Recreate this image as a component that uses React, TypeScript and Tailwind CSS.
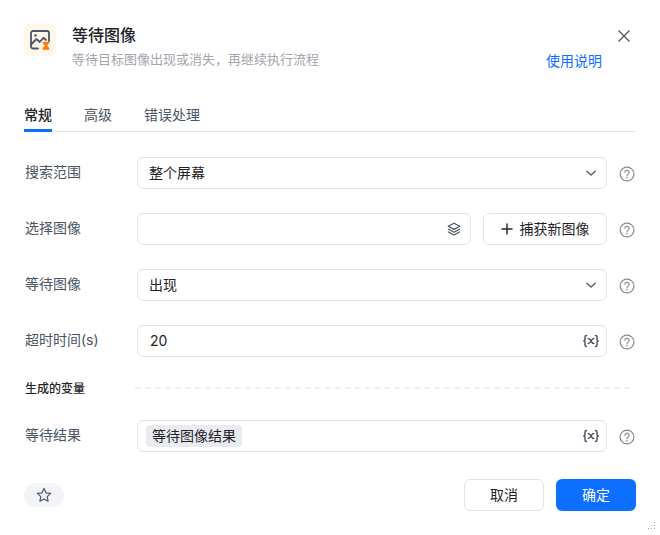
import React from "react";

const font = { fontFamily: '"Inter","Noto Sans CJK SC",sans-serif' };

function Help() {
  return (
    <svg width="16" height="16" viewBox="0 0 16 16" fill="none" className="shrink-0 ml-[12px] mt-[1px] text-[#8a8a8a]" stroke="currentColor">
      <circle cx="8" cy="8" r="6.9" strokeWidth="1.2" />
      <path d="M5.900 6.300a2.100 2.100 0 1 1 3.300 1.700c-.8.5-1.200.9-1.200 1.800" strokeWidth="1.200" strokeLinecap="round" />
      <circle cx="8" cy="11.800" r=".8" fill="currentColor" stroke="none" />
    </svg>
  );
}

function Chevron() {
  return (
    <svg width="12" height="12" viewBox="0 0 12 12" fill="none" stroke="#4b5563" strokeWidth="1.2" strokeLinecap="round" strokeLinejoin="round" className="shrink-0">
      <path d="M1.800 4.200 6 8l4.200-3.800" />
    </svg>
  );
}

function VarIcon() {
  return (
    <svg width="16" height="14" viewBox="0 0 16 14" fill="none" stroke="#4b5563" strokeWidth="1.500" strokeLinecap="round" strokeLinejoin="round" className="shrink-0 -mr-[2px]">
      <path d="M3.500 1.500C2.300 1.500 2 2 2 3v2.400c0 .8-.4 1.300-1.200 1.600.8.300 1.200.8 1.200 1.600V11c0 1 .3 1.500 1.500 1.500" />
      <path d="M12.500 1.500c1.200 0 1.500.5 1.500 1.500v2.400c0 .8.400 1.300 1.200 1.600-.8.300-1.200.8-1.200 1.600V11c0 1-.3 1.500-1.500 1.500" />
      <path d="M5.200 4.500c1.500 0 1.900.8 2.800 2.500s1.300 2.500 2.800 2.500M10.800 4.500C9.400 4.500 8.600 5.800 8 7s-1.400 2.500-2.800 2.500" />
    </svg>
  );
}

function Row({ label, children, className }: { label: string; children: React.ReactNode; className: string }) {
  return (
    <div className={`flex items-start ${className}`}>
      <div className="w-[113px] pl-[1px] pt-[5px] text-[14px] leading-[20px] text-[#4b5563] shrink-0">{label}</div>
      {children}
    </div>
  );
}

function Box({ children, className = "" }: { children?: React.ReactNode; className?: string }) {
  return (
    <div className={`h-8 flex items-center border border-[#e2e3e9] rounded-md bg-white pr-[9px] text-[14px] text-[#1f2329] ${className}`}>
      {children}
    </div>
  );
}

export default function App() {
  return (
    <div className="relative w-[660px] h-[535px] bg-white overflow-hidden px-6 pt-6" style={font}>
      <div className="flex items-start h-[32px]">
        <div className="w-8 h-8 rounded-md bg-[#fff7ea] flex items-center justify-center shrink-0">
          <svg width="24" height="24" viewBox="0 0 24 24" fill="none">
            <path d="M10 20.500H5a2 2 0 0 1-2-2V5a2 2 0 0 1 2-2h14a2 2 0 0 1 2 2v8" stroke="#4b5563" strokeWidth="1.800" strokeLinecap="round" />
            <path d="M3.500 16 8.500 11l3.200 3 3.800-4.200 2.500 2.200" stroke="#4b5563" strokeWidth="1.800" strokeLinecap="round" strokeLinejoin="round" />
            <circle cx="7.500" cy="7.500" r="1.300" fill="#4b5563" />
            <path d="M14.700 13.700h6.600v1.600l-2.200 2.400 2.200 2.400v1.600h-6.600v-1.600l2.200-2.400-2.200-2.400z" fill="#f97c12" />
          </svg>
        </div>
        <div className="ml-4 flex-1 min-w-0">
          <div className="text-[16px] leading-[22px] font-medium text-[#1f2329]">等待图像</div>
          <div className="mt-[3px] text-[13px] leading-[20px] text-[#a3a6ad]">等待目标图像出现或消失，再继续执行流程</div>
        </div>
        <div className="w-[90px] h-[60px] relative shrink-0">
          <svg width="14" height="14" viewBox="0 0 14 14" fill="none" stroke="#4b5563" strokeWidth="1.300" strokeLinecap="round" className="absolute left-[71px] top-[5px]">
            <path d="M2 2l10 10M12 2 2 12" />
          </svg>
          <div className="absolute left-0 top-[27px] text-[14px] leading-[20px] text-[#0c6fff] whitespace-nowrap">使用说明</div>
        </div>
      </div>

      <div className="mt-[38px] flex h-[38px] border-b border-[#e4e5e9] text-[14px] leading-[20px] pt-[11px]">
        <div className="relative w-7 h-[26px] font-medium text-[#1f2329]">
          常规
          <div className="absolute left-0 right-0 -bottom-[1px] h-[3px] bg-[#0c6fff]" />
        </div>
        <div className="ml-8 text-[#4b5563]">高级</div>
        <div className="ml-8 text-[#4b5563]">错误处理</div>
      </div>

      <div className="w-[612px]">
        <Row label="搜索范围" className="mt-[25px]">
          <Box className="w-[470px] justify-between pl-[11px]"><span className="pb-[2px]">整个屏幕</span><Chevron /></Box>
          <div className="pt-[8px]"><Help /></div>
        </Row>
        <Row label="选择图像" className="mt-6">
          <Box className="w-[334px] justify-end pl-3">
            <svg width="14" height="14" viewBox="0 0 14 14" fill="none" stroke="#4b5563" strokeWidth="1.200" strokeLinejoin="round" strokeLinecap="round">
              <path d="M7 1.200 12.800 4.300 7 7.400 1.200 4.300z" />
              <path d="M1.500 7.200 7 10.200l5.500-3M1.500 10 7 13l5.500-3" />
            </svg>
          </Box>
          <div className="ml-3 w-[124px] h-8 border border-[#e2e3e9] rounded-md flex items-center justify-center text-[14px] text-[#1f2329]">
            <svg width="12" height="12" viewBox="0 0 12 12" stroke="#1f2329" strokeWidth="1.400" className="mr-[7px]">
              <path d="M6 .5v11M.5 6h11" />
            </svg>
            <span className="pb-[2px]">捕获新图像</span>
          </div>
          <div className="pt-[8px]"><Help /></div>
        </Row>
        <Row label="等待图像" className="mt-6">
          <Box className="w-[470px] justify-between pl-[11px]"><span className="pb-[2px]">出现</span><Chevron /></Box>
          <div className="pt-[8px]"><Help /></div>
        </Row>
        <Row label="超时时间(s)" className="mt-6">
          <Box className="w-[470px] justify-between pl-3"><span className="pb-[2px]">20</span><VarIcon /></Box>
          <div className="pt-[8px]"><Help /></div>
        </Row>
      </div>

      <div className="mt-[23px] flex items-center h-[18px]">
        <div className="w-[111px] pl-[1px] text-[12px] leading-[18px] font-medium text-[#1f2329] shrink-0">生成的变量</div>
        <div className="w-[495px] -mt-[2px] border-t-2 border-dashed border-[#eeeff2]" />
      </div>

      <div className="w-[612px]">
        <Row label="等待结果" className="mt-[22px]">
          <Box className="w-[470px] justify-between pl-2">
            <span className="h-[22px] px-[6px] bg-[#e9ebef] rounded text-[14px] leading-[21px] text-[#1f2329]">等待图像结果</span>
            <VarIcon />
          </Box>
          <div className="pt-[8px]"><Help /></div>
        </Row>
      </div>

      <div className="mt-[27px] flex items-center justify-between h-8">
        <div className="w-10 h-6 rounded-full bg-[#f3f4f7] flex items-center justify-center">
          <svg width="16" height="16" viewBox="0 0 16 16" fill="none" stroke="#4b5563" strokeWidth="1.200" strokeLinejoin="round">
            <path d="M8 1.500 10 5.800l4.600.6-3.400 3.200.9 4.600L8 11.900 3.900 14.200l.9-4.600L1.400 6.400 6 5.800z" />
          </svg>
        </div>
        <div className="flex gap-3">
          <div className="w-20 h-8 pb-[2px] border border-[#e2e3e9] rounded-md flex items-center justify-center text-[14px] text-[#1f2329]">取消</div>
          <div className="w-20 h-8 pb-[2px] rounded-md bg-[#0c6fff] flex items-center justify-center text-[14px] text-white">确定</div>
        </div>
      </div>

      <svg width="10" height="10" viewBox="0 0 10 10" fill="#9ca3af" className="absolute left-[647px] top-[522px]">
        <rect x="7" y="0" width="1" height="1" />
        <rect x="4" y="3" width="1" height="1" /><rect x="7" y="3" width="1" height="1" />
        <rect x="1" y="6" width="1" height="1" /><rect x="4" y="6" width="1" height="1" /><rect x="7" y="6" width="1" height="1" />
      </svg>
    </div>
  );
}
